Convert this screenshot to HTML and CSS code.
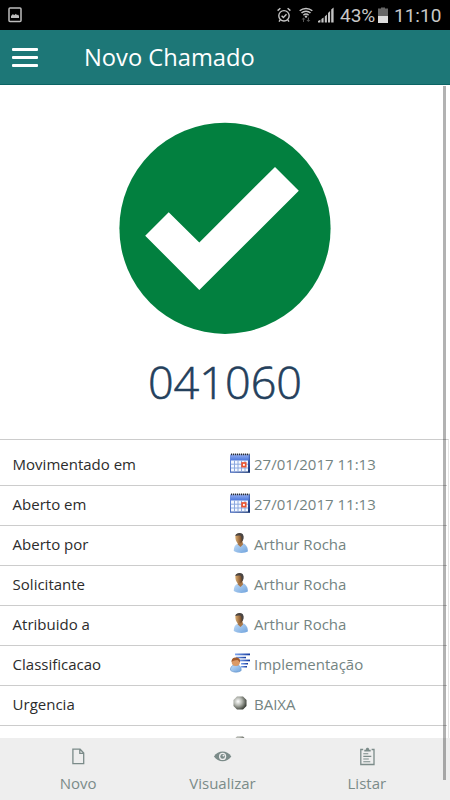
FILE: index.html
```html
<!DOCTYPE html>
<html lang="pt-BR">
<head>
<meta charset="UTF-8">
<meta name="viewport" content="width=device-width, initial-scale=1.0">
<title>Novo Chamado</title>
<link rel="stylesheet" href="styles.css">
</head>
<body>

<!-- Shared icons -->
<svg class="sprite" width="0" height="0">
  <defs>
    <linearGradient id="calTop" x1="0" y1="0" x2="0" y2="1">
      <stop offset="0" stop-color="#8eaaf0"/>
      <stop offset="1" stop-color="#4a76dc"/>
    </linearGradient>
    <linearGradient id="calFrame" x1="0" y1="0" x2="1" y2="1">
      <stop offset="0" stop-color="#7c9ce8"/>
      <stop offset="0.6" stop-color="#3f62b4"/>
      <stop offset="1" stop-color="#0d2a66"/>
    </linearGradient>
    <linearGradient id="shirt" x1="0" y1="0" x2="1" y2="1">
      <stop offset="0" stop-color="#c2ddf8"/>
      <stop offset="1" stop-color="#6fa2dc"/>
    </linearGradient>
    <linearGradient id="face" x1="0" y1="0" x2="1" y2="0">
      <stop offset="0" stop-color="#d9ad72"/>
      <stop offset="0.55" stop-color="#98683c"/>
      <stop offset="1" stop-color="#3c2c22"/>
    </linearGradient>
    <linearGradient id="line" x1="0" y1="0" x2="1" y2="0">
      <stop offset="0" stop-color="#7fa6f0"/>
      <stop offset="1" stop-color="#12389c"/>
    </linearGradient>
    <radialGradient id="ball" cx="0.35" cy="0.38" r="0.68">
      <stop offset="0" stop-color="#ffffff"/>
      <stop offset="0.45" stop-color="#b4b7b0"/>
      <stop offset="1" stop-color="#3c4038"/>
    </radialGradient>
  </defs>
  <symbol id="calendar" viewBox="0 0 20 20">
    <rect x="0" y="1.5" width="20" height="18.3" fill="url(#calFrame)"/>
    <rect x="0.5" y="2" width="18.2" height="5.5" fill="url(#calTop)"/>
    <path d="M1 1.3H19.5" stroke="#2b2f38" stroke-width="1.8" stroke-dasharray="1.2 0.8"/>
    <rect x="1" y="7.5" width="17" height="11" fill="#f4f8ff"/>
    <path d="M1 11.2H18M1 15H18M4.5 7.5V18.5M8 7.5V18.5M11.5 7.5V18.5M15 7.5V18.5" stroke="#8ca9df" stroke-width="1"/>
    <rect x="12.1" y="10" width="3.6" height="3.6" fill="#fff" stroke="#ec5530" stroke-width="1.7"/>
  </symbol>
  <symbol id="person" viewBox="0 0 20 20">
    <path d="M3.8 18C3.6 14.5 5 12 7 11L13 10.2C16 11.3 18.2 14.5 17.8 18.5C15 20.4 7.5 20.6 3.8 18Z" fill="url(#shirt)"/>
    <path d="M7.5 9L12.5 8.5L13 11.5L10.5 14L7.8 11.5Z" fill="#a87545"/>
    <path d="M5.3 4C5.2 1.3 7 0.2 9.5 0.3C12.5 0.4 13.7 2.3 13.3 5.4C13 8.3 11.4 10.4 9.3 10.4C6.8 10.4 5.5 7.5 5.3 4Z" fill="url(#face)"/>
    <path d="M5.3 3C5.8 0.8 7.5 0 9.8 0C13 0.1 14.2 2.5 13.2 6.5L12 8C12 5.5 11.7 3.5 10.8 2.8C9 2.3 7 2.2 5.3 3Z" fill="#4a4644"/>
  </symbol>
  <symbol id="category" viewBox="0 0 20 20">
    <rect x="5" y="0.5" width="15" height="1.8" fill="url(#line)"/>
    <rect x="6" y="3.8" width="10" height="1.5" fill="url(#line)"/>
    <rect x="9" y="6.6" width="11" height="1.7" fill="url(#line)"/>
    <rect x="11" y="10" width="7" height="1.5" fill="url(#line)"/>
    <rect x="11" y="13" width="6" height="1.5" fill="url(#line)"/>
    <path d="M0.3 17C0.5 14 2 12.5 4 12H8C10.2 12.8 11.3 14.5 11.2 17.5C8.5 19.8 2.5 19.7 0.3 17Z" fill="url(#shirt)" stroke="#5d8fc8" stroke-width="0.6"/>
    <circle cx="5.8" cy="9" r="4.1" fill="#dc9a65"/>
    <path d="M1.6 9C1.4 5.8 3.4 4.5 6 4.5C8.8 4.6 10.5 6.2 10 9.4C9 8.6 8.6 7.5 7.5 7C5.5 7.2 3 7.2 1.6 9Z" fill="#a15a2c"/>
  </symbol>
  <symbol id="sphere" viewBox="0 0 14 14">
    <path d="M4 0.5H10L13.5 4V10L10 13.5H4L0.5 10V4Z" fill="url(#ball)"/>
  </symbol>
</svg>

<div class="app">

  <!-- Android status bar -->
  <div class="status-bar">
    <svg class="status-image" width="14" height="16" viewBox="0 0 14 16">
      <rect x="1" y="1" width="12" height="13.5" rx="1" fill="none" stroke="#bdbdbd" stroke-width="1.5"/>
      <path d="M3 11V9L5 7L6 8.3L8 6.7L9 8.3L10 7.5L11 9V11Z" fill="#bdbdbd"/>
    </svg>
    <div class="status-right">
      <svg class="alarm" width="14" height="16" viewBox="0 0 14 16">
        <g fill="none" stroke="#c4c4c4" stroke-width="1.4">
          <circle cx="7" cy="8.8" r="5.2"/>
          <path d="M4.6 8.7L6.4 10.5L9.5 7.3M0.6 3.6L3.4 1.2M10.6 1.2L13.4 3.6M3.2 13L2 14.6M10.8 13L12 14.6"/>
        </g>
      </svg>
      <svg class="wifi" width="14" height="16" viewBox="0 0 14 16">
        <g fill="none" stroke="#c4c4c4" stroke-width="1.5">
          <path d="M0.7 3.8C4.2 0.6 9.8 0.6 13.3 3.8M2.5 6C5 3.6 9 3.6 11.5 6M4.4 8.2C6 6.7 8 6.7 9.6 8.2"/>
        </g>
        <circle cx="7" cy="9.6" r="1.2" fill="#c4c4c4"/>
        <path d="M4.5 10.5L2.5 12.5H4V15H5V12.5H6.5ZM8.8 10.5V13H7.4L9.4 15L11.4 13H10V10.5Z" fill="#555"/>
      </svg>
      <svg class="signal" width="16" height="16" viewBox="0 0 16 16">
        <path d="M0 15.5V14L2.4 12.8V15.5ZM3.4 15.5V12L5.6 10.5V15.5ZM6.8 15.5V9.5L8.9 7.6V15.5ZM10 15.5V6L12.1 4V15.5ZM13.2 15.5V2.5L15.6 0.5V15.5Z" fill="#c4c4c4"/>
      </svg>
      <span class="percent">43%</span>
      <svg class="battery" width="10" height="16" viewBox="0 0 10 16">
        <path d="M0 1.5H3V0.5H7V1.5H10V16H0Z" fill="#666"/>
        <rect x="0" y="9" width="10" height="7" fill="#ddd"/>
      </svg>
      <span class="clock">11:10</span>
    </div>
  </div>

  <header class="header">
    <div class="menu">
      <span></span>
      <span></span>
      <span></span>
    </div>
    <h1>Novo Chamado</h1>
  </header>

  <main class="content">
    <div class="success">
      <svg width="212" height="212" viewBox="0 0 212 212">
        <circle cx="106" cy="106.3" r="105.6" fill="#02803f"/>
        <path d="M26.2 113.7L49.7 90.2L80.3 120.5L156 44.9L179.8 68.7L80.3 168Z" fill="#fff"/>
      </svg>
      <div class="number">041060</div>
    </div>

    <div class="details">
      <div class="row first">
        <span class="label">Movimentado em</span>
        <svg class="icon"><use href="#calendar"/></svg>
        <span class="value">27/01/2017 11:13</span>
      </div>
      <div class="row">
        <span class="label">Aberto em</span>
        <svg class="icon"><use href="#calendar"/></svg>
        <span class="value">27/01/2017 11:13</span>
      </div>
      <div class="row">
        <span class="label">Aberto por</span>
        <svg class="icon"><use href="#person"/></svg>
        <span class="value">Arthur Rocha</span>
      </div>
      <div class="row">
        <span class="label">Solicitante</span>
        <svg class="icon"><use href="#person"/></svg>
        <span class="value">Arthur Rocha</span>
      </div>
      <div class="row">
        <span class="label">Atribuido a</span>
        <svg class="icon"><use href="#person"/></svg>
        <span class="value">Arthur Rocha</span>
      </div>
      <div class="row">
        <span class="label">Classificacao</span>
        <svg class="icon"><use href="#category"/></svg>
        <span class="value">Implementação</span>
      </div>
      <div class="row">
        <span class="label">Urgencia</span>
        <svg class="icon small"><use href="#sphere"/></svg>
        <span class="value">BAIXA</span>
      </div>
      <!-- cut off by the tab bar -->
      <div class="row">
        <span class="label"></span>
        <svg class="icon small"><use href="#sphere"/></svg>
      </div>
    </div>
  </main>

  <footer class="tabs">
    <div class="tab">
      <svg width="20" height="20" viewBox="0 0 20 20">
        <path d="M4.9 3.2H12.1L15.7 7V17.6H4.9ZM11.8 3.2V7.4H15.7" fill="none" stroke="#7b8b89" stroke-width="1.3"/>
      </svg>
      <span>Novo</span>
    </div>
    <div class="tab">
      <svg width="20" height="20" viewBox="0 0 20 20">
        <path d="M1.9 10.4C6.1 3.8 15.1 3.8 19.3 10.4C15.1 16.8 6.1 16.8 1.9 10.4Z" fill="#7b8b89"/>
        <circle cx="10.6" cy="10.4" r="3.6" fill="#eee"/>
        <circle cx="10.6" cy="10.4" r="2.3" fill="#7b8b89"/>
        <circle cx="11.4" cy="9.6" r="0.9" fill="#eee"/>
      </svg>
      <span>Visualizar</span>
    </div>
    <div class="tab">
      <svg width="20" height="20" viewBox="0 0 20 20">
        <path d="M6.2 3.5H3.8V18.5H17V3.5H14.6" fill="none" stroke="#7b8b89" stroke-width="1.3"/>
        <path d="M7.3 5.6V3.7H8.8C8.8 1.2 12.2 1.2 12.2 3.7H13.7V5.6Z" fill="#7b8b89"/>
        <path d="M6.3 7.8H11.3M6.3 10.4H14.3M6.3 13H11.8M6.3 15.7H13.3" stroke="#7b8b89" stroke-width="1.1"/>
      </svg>
      <span>Listar</span>
    </div>
  </footer>

  <div class="scrollbar"></div>
</div>

</body>
</html>
```
FILE: styles.css
```css
* { box-sizing: border-box; }
body { margin: 0; font-family: "Open Sans", "Noto Sans", sans-serif; background: #fff; }
.sprite { position: absolute; }
.app {
  position: relative;
  display: flex;
  flex-direction: column;
  width: 450px;
  height: 800px;
  overflow: hidden;
}

/* Status bar */
.status-bar {
  display: flex;
  justify-content: space-between;
  align-items: center;
  height: 30px;
  padding: 0 9px 0 8px;
  background: #000;
  color: #c8c8c8;
  font-family: Roboto, sans-serif;
}
.status-right { display: flex; align-items: center; }
.wifi { margin-left: 8px; }
.signal { margin-left: 5px; }
.percent { margin-left: 6px; width: 35px; font-size: 19px; white-space: nowrap; }
.battery { margin-left: 3px; }
.clock { margin-left: 6px; width: 47px; font-size: 19px; white-space: nowrap; }

/* Header */
.header {
  display: flex;
  align-items: center;
  height: 55px;
  padding-left: 12px;
  background: #1d7777;
  border-bottom: 1px solid #0b6464;
}
.menu { display: flex; flex-direction: column; gap: 5px; width: 26px; }
.menu span { height: 3px; background: #fff; border-radius: 1px; }
.header h1 { margin: 0 0 0 46px; color: #fff; font-size: 23.7px; font-weight: 400; line-height: 54px; }

/* Ticket number */
.content { flex: 1; min-height: 0; overflow: hidden; }
.success {
  display: flex;
  flex-direction: column;
  align-items: center;
  height: 354px;
  padding-top: 37px;
}
.number {
  margin-top: 17px;
  color: #24405c;
  font-size: 45px;
  font-weight: 300;
  line-height: 62px;
  -webkit-text-stroke: 0.6px #24405c; /* a bit heavier than light */
}

/* Details */
.details { width: 449px; border-right: 1px solid #e4e4e4; border-top: 1px solid #ccc; }
.row {
  display: flex;
  align-items: center;
  width: 447px;
  height: 40px;
  padding: 0 0 3px 12.6px;
  border-bottom: 1px solid #ccc;
  font-size: 15px;
}
.row.first { height: 46px; padding-top: 6px; }
.label { width: 217.4px; color: #2c2c2c; }
.icon { width: 20px; height: 20px; margin: -2px 4px 0 0; }
.icon.small { width: 14px; height: 14px; margin: -2px 7px 0 3px; }
.value { color: #748482; }

/* Bottom tabs */
.tabs { display: flex; height: 62px; padding: 0 11px 0 6px; background: #eee; }
.tab {
  flex: 1;
  display: flex;
  flex-direction: column;
  align-items: center;
  padding-top: 8px;
  color: #7b8b89;
  font-size: 15px;
}
.tab span { margin-top: 7px; line-height: 20px; }

.scrollbar {
  position: absolute;
  top: 86px;
  left: 443px;
  width: 3px;
  height: 694px;
  background: rgba(0, 0, 0, 0.3);
}
```
